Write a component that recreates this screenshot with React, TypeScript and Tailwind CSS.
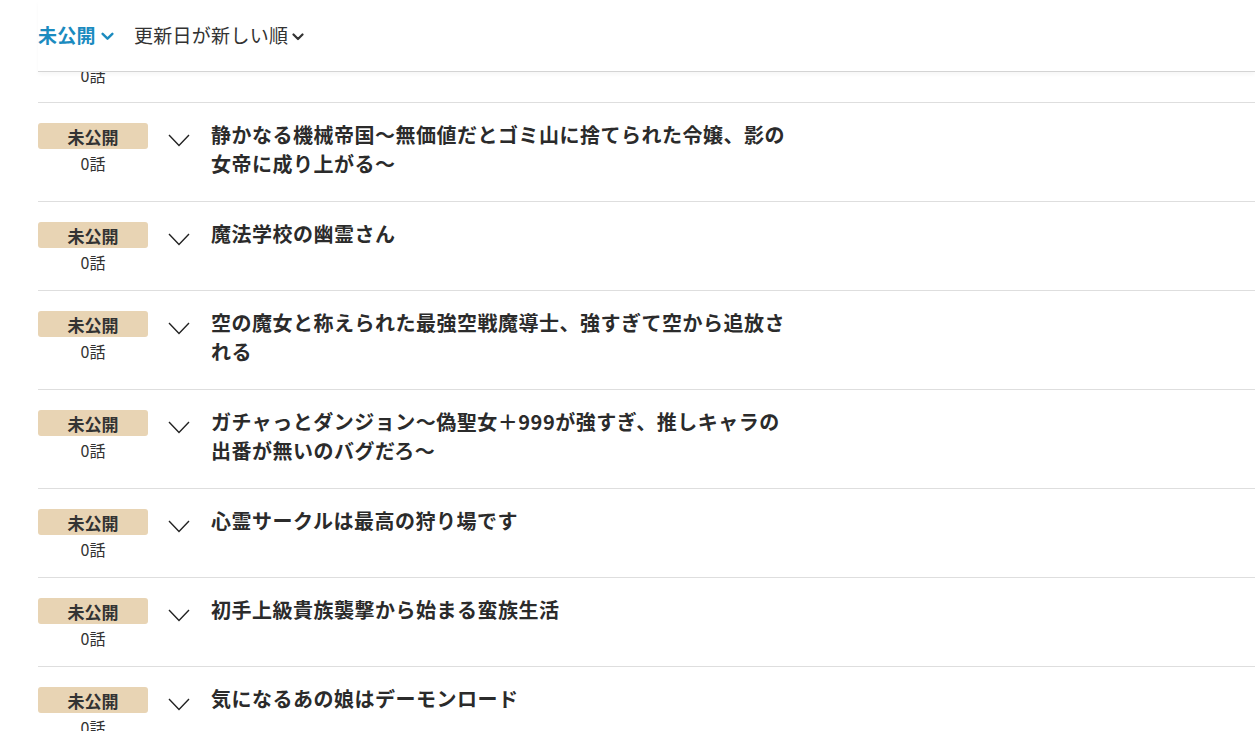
import React from 'react';

const titles = [
  '静かなる機械帝国～無価値だとゴミ山に捨てられた令嬢、影の女帝に成り上がる～',
  '魔法学校の幽霊さん',
  '空の魔女と称えられた最強空戦魔導士、強すぎて空から追放される',
  'ガチャっとダンジョン～偽聖女＋999が強すぎ、推しキャラの出番が無いのバグだろ～',
  '心霊サークルは最高の狩り場です',
  '初手上級貴族襲撃から始まる蛮族生活',
  '気になるあの娘はデーモンロード',
];

const font = { fontFamily: '"Noto Sans CJK JP", "Noto Sans", sans-serif' };

function SmallChevron({ className }: { className: string }) {
  return (
    <svg viewBox="0 0 12 8" className={className} fill="none" stroke="currentColor" strokeWidth="2.2" strokeLinecap="round" strokeLinejoin="round">
      <polyline points="1.5,1.5 6,6 10.5,1.5" />
    </svg>
  );
}

function Row({ title }: { title: string }) {
  return (
    <div className="flex items-start border-b border-[#dedede] pt-5 pb-5">
      <div className="flex h-[48px] w-[110px] shrink-0 flex-col items-center">
        <span className="flex h-[26px] w-full shrink-0 items-center justify-center rounded-[3px] bg-[#e8d4b4] text-[17px] font-bold leading-none text-[#333]">
          未公開
        </span>
        <span className="mt-[2px] text-[16px] leading-[24px] text-[#333]">0話</span>
      </div>
      <div className="ml-5 mt-[11px] w-[22px] shrink-0 text-[#222]">
        <svg viewBox="0 0 22 13" className="h-[13px] w-[22px]" fill="none" stroke="currentColor" strokeWidth="1.4">
          <polyline points="1,1 11,11.5 21,1" />
        </svg>
      </div>
      <h2 className="mb-[3px] ml-[21px] -mt-[3px] w-[589px] text-[20px] font-bold leading-[29px] tracking-[0.5px] text-[#2b2b2b]">
        {title}
      </h2>
    </div>
  );
}

export default function App() {
  return (
    <div className="min-h-screen overflow-hidden bg-white pl-[38px]" style={font}>
      {/* filter / sort bar */}
      <div className="flex h-[72px] items-center border-b border-[#d4d4d4] shadow-[0_3px_4px_rgba(0,0,0,0.03)]">
        <button className="flex items-center text-[19px] font-bold tracking-[0.3px] text-[#1b8bbf]">
          未公開
          <SmallChevron className="ml-[5px] mt-[2px] h-[9px] w-[13px]" />
        </button>
        <button className="ml-5 flex items-center text-[19px] tracking-[0.3px] text-[#333]">
          更新日が新しい順
          <SmallChevron className="ml-[4px] mt-[2px] h-[8px] w-[12px]" />
        </button>
      </div>

      {/* tail of the row scrolled under the bar */}
      <div className="h-[31px] overflow-hidden border-b border-[#dedede]">
        <div className="-mt-[9px] flex w-[110px] justify-center text-[16px] leading-[24px] text-[#333]">0話</div>
      </div>

      {titles.map((t) => (
        <Row key={t} title={t} />
      ))}
    </div>
  );
}
